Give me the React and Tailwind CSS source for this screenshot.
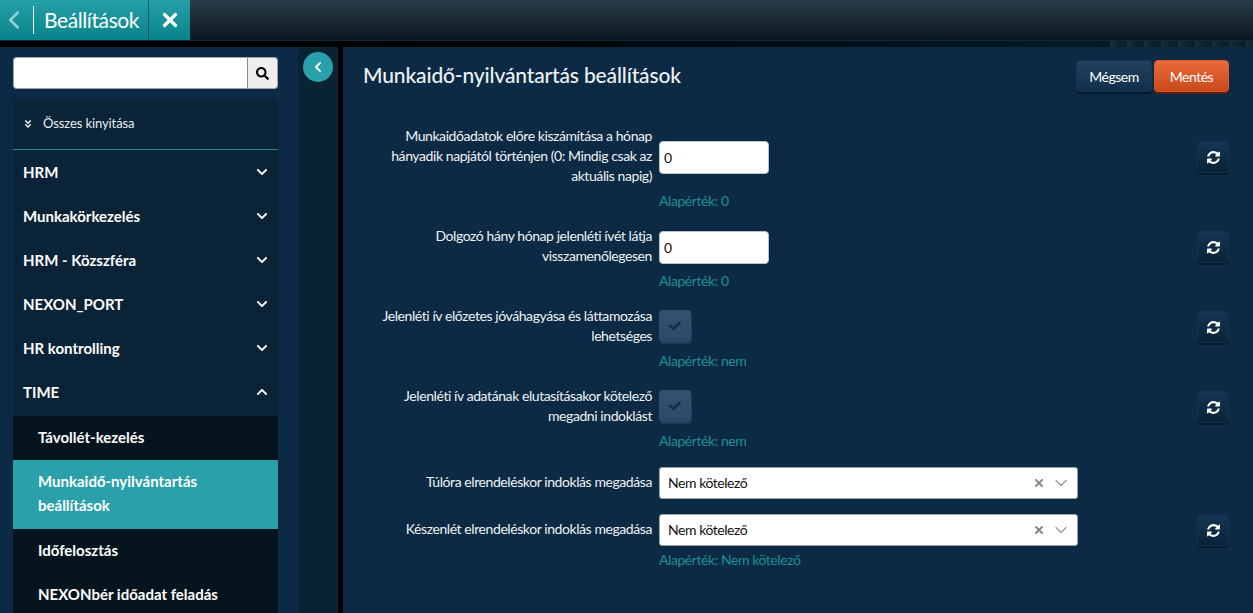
import { FaSearch, FaCheck, FaChevronDown, FaChevronUp, FaChevronLeft, FaAngleDoubleDown } from 'react-icons/fa';
import { ChevronLeft, ChevronDown, X } from 'lucide-react';

const menu = ['HRM', 'Munkakörkezelés', 'HRM - Közszféra', 'NEXON_PORT', 'HR kontrolling'];

const RefreshButton = ({ top = 'mt-[5px]' }) => (
  <button className={`${top} w-[32px] h-[32px] rounded-[4px] flex items-center justify-center text-white bg-gradient-to-b from-[#143553] to-[#0b2238] border border-[#12334f] shadow-[0_2px_0_#071a2b]`}>
    <svg viewBox="0 0 1792 1792" className="w-[15px] h-[15px]" fill="currentColor">
      <path d="M1639 1056q0 5-1 7-64 268-268 434.5t-478 166.5q-146 0-282.5-55t-243.5-157l-129 129q-19 19-45 19t-45-19-19-45v-448q0-26 19-45t45-19h448q26 0 45 19t19 45-19 45l-137 137q71 66 161 102t187 36q134 0 250-65t186-179q11-17 53-117 8-23 30-23h192q13 0 22.5 9.5t9.5 22.5zm25-800v448q0 26-19 45t-45 19h-448q-26 0-45-19t-19-45 19-45l138-138q-148-137-349-137-134 0-250 65t-186 179q-11 17-53 117-8 23-30 23h-199q-13 0-22.5-9.5t-9.5-22.5v-7q65-268 270-434.5t480-166.5q146 0 284 55.5t245 156.5l130-129q19-19 45-19t45 19 19 45z" />
    </svg>
  </button>
);

const Row = ({ label, hint, refresh = true, refreshTop, children, labelClass = '', hintClass = 'mt-[7px]' }) => (
  <div className="flex items-start">
    <div className={`w-[289px] text-right text-[#eef2f5] text-[14px] leading-[20px] tracking-[-0.42px] ${labelClass}`}>{label}</div>
    <div className="flex-1 ml-[7px]">
      {children}
      {hint && <div className={`text-[#1f8f96] text-[14px] leading-[20px] tracking-[-0.43px] ${hintClass}`}>{hint}</div>}
    </div>
    {refresh && <RefreshButton top={refreshTop} />}
  </div>
);

const NumberInput = () => (
  <input
    readOnly
    value="0"
    className="w-[110px] h-[33px] bg-white rounded-[4px] border border-[#b8c4cc] px-[4px] text-[14px] text-[#111]"
  />
);

const Check = () => (
  <div className="w-[32px] h-[32px] rounded-[4px] bg-gradient-to-b from-[#33526e] to-[#2b4a68] shadow-[1px_2px_0_#1f3d58] flex items-center justify-center text-[#152c44]">
    <FaCheck className="w-[12px] h-[12px]" />
  </div>
);

const Select = () => (
  <div className="w-[419px] h-[32px] bg-white rounded-[3px] border border-[#9aa3a8] flex items-center pl-[8px] pr-[6px] pb-[1px] text-[14px] text-[#111] tracking-[-0.45px]">
    <span className="flex-1">Nem kötelező</span>
    <X className="w-[12px] h-[12px] text-[#888] mr-[6px]" strokeWidth={4} />
    <ChevronDown className="w-[20px] h-[20px] text-[#999]" strokeWidth={1.5} />
  </div>
);

export default function App() {
  return (
    <div className="w-[1253px] h-[613px] overflow-hidden bg-black flex flex-col font-['Lato',sans-serif] relative">
      {/* Top bar */}
      <div className="h-[41px] shrink-0 flex bg-gradient-to-b from-[#2b3c48] to-[#0a1820] border-b border-[#0b2b3a]">
        <div className="w-[190px] flex bg-gradient-to-b from-[#24a0a8] to-[#07848a] text-white">
          <div className="w-[33px] flex items-center justify-center">
            <ChevronLeft className="w-[30px] h-[30px] text-[#8fd0d2] ml-[-5px]" strokeWidth={2} />
          </div>
          <div className="w-px h-[28px] bg-white my-auto" />
          <div className="w-[114px] pl-[10px] text-[21px] leading-[40px] tracking-[-0.4px]">Beállítások</div>
          <div className="flex-1 border-l border-[#0a5a60] flex items-center justify-center">
            <X className="w-[22px] h-[22px]" strokeWidth={3.5} />
          </div>
        </div>
      </div>
      <div className="h-[6px] shrink-0 flex justify-end bg-gradient-to-r from-black to-[#05222f]">
        <div className="w-[143px] bg-[repeating-linear-gradient(90deg,#1e2f36_0,#0e2229_8px,#07202a_17px)]" />
      </div>

      <div className="flex-1 flex min-h-0">
        {/* Sidebar */}
        <div className="w-[298px] shrink-0 bg-[#0c2a45] pl-[13px] pr-[20px] pt-[10px] overflow-hidden">
          <div className="flex h-[32px] rounded-[3px] overflow-hidden border border-[#9aa3a8]">
            <div className="flex-1 bg-white" />
            <div className="w-[30px] bg-[#eeeeee] border-l border-[#8a8a8a] flex items-center justify-center text-black">
              <FaSearch className="w-[13px] h-[13px]" />
            </div>
          </div>
          <div className="mt-[10px] bg-[#0a2337]">
            <div className="h-[51px] flex items-center pl-[10px] text-[#e9eef2] text-[13px] tracking-[-0.1px] border-b border-[#1c8f96]">
              <FaAngleDoubleDown className="w-[10px] h-[10px] mr-[10px]" />
              Összes kinyitása
            </div>
            {menu.map((item) => (
              <div key={item} className="h-[44px] flex items-center justify-between pl-[10px] pr-[10px] text-white text-[15px] font-bold">
                {item}
                <FaChevronDown className="w-[12px] h-[12px]" />
              </div>
            ))}
            <div className="h-[46px] flex items-center justify-between pb-[2px] pl-[10px] pr-[10px] text-white text-[15px] font-bold">
              TIME
              <FaChevronUp className="w-[12px] h-[12px]" />
            </div>
            <div className="bg-[#06141e] text-white text-[15px] font-bold">
              <div className="h-[44px] flex items-center pl-[25px] pb-[2px]">Távollét-kezelés</div>
              <div className="h-[69px] flex items-center pl-[25px] pr-[10px] pb-[3px] bg-[#29a0aa] leading-[24px]">Munkaidő-nyilvántartás beállítások</div>
              <div className="h-[44px] flex items-center pl-[25px] pb-[2px]">Időfelosztás</div>
              <div className="h-[44px] flex items-center pl-[25px] pb-[2px]">NEXONbér időadat feladás</div>
            </div>
          </div>
        </div>

        {/* Collapsed strip */}
        <div className="w-[40px] shrink-0 bg-[#0a2333]" />
        <div className="w-[5px] shrink-0 bg-black" />

        {/* Main content */}
        <div className="flex-1 bg-[#0c2a43] pl-[20px] pr-[24px] pt-[13px]">
          <div className="flex items-start justify-between h-[34px]">
            <h1 className="text-[21px] leading-[30px] tracking-[-0.15px] font-medium text-[#eef2f5]">Munkaidő-nyilvántartás beállítások</h1>
            <div className="flex gap-[2px]">
              <button className="w-[76px] h-[32px] rounded-[4px] text-white text-[14px] tracking-[-0.5px] bg-gradient-to-b from-[#23425f] to-[#12304b] border border-[#16364f] shadow-[0_2px_0_#071a2b]">Mégsem</button>
              <button className="w-[75px] h-[32px] rounded-[4px] text-white text-[14px] tracking-[-0.5px] bg-gradient-to-b from-[#ea6a3a] to-[#c9491b] border border-[#d9592a] shadow-[0_2px_0_#5a2010]">Mentés</button>
            </div>
          </div>

          <div className="mt-[32px] flex flex-col">
            <div className="h-[100px]">
              <Row label="Munkaidőadatok előre kiszámítása a hónap hányadik napjától történjen (0: Mindig csak az aktuális napig)" hint="Alapérték: 0" refreshTop="mt-[15px]" hintClass="mt-[17px]">
                <div className="mt-[15px]"><NumberInput /></div>
              </Row>
            </div>
            <div className="h-[80px]">
              <Row label="Dolgozó hány hónap jelenléti ívét látja visszamenőlegesen" hint="Alapérték: 0">
                <div className="mt-[5px]"><NumberInput /></div>
              </Row>
            </div>
            <div className="h-[80px]">
              <Row label="Jelenléti ív előzetes jóváhagyása és láttamozása lehetséges" hint="Alapérték: nem" hintClass="mt-[9px]">
                <div className="mt-[4px]"><Check /></div>
              </Row>
            </div>
            <div className="h-[80px]">
              <Row label="Jelenléti ív adatának elutasításakor kötelező megadni indoklást" hint="Alapérték: nem" hintClass="mt-[9px]">
                <div className="mt-[4px]"><Check /></div>
              </Row>
            </div>
            <div className="h-[47px]">
              <Row label="Túlóra elrendeléskor indoklás megadása" refresh={false} labelClass="mt-[6px]">
                <div className="mt-[1px]"><Select /></div>
              </Row>
            </div>
            <div>
              <Row label="Készenlét elrendeléskor indoklás megadása" hint="Alapérték: Nem kötelező" labelClass="mt-[6px]" refreshTop="mt-[1px]" hintClass="mt-[4px]">
                <div className="mt-[1px]"><Select /></div>
              </Row>
            </div>
          </div>
        </div>
      </div>

      {/* Sidebar collapse toggle */}
      <div className="absolute left-[303px] top-[52px] w-[30px] h-[30px] rounded-full bg-[#29a0aa] flex items-center justify-center text-white">
        <FaChevronLeft className="w-[12px] h-[12px]" />
      </div>
    </div>
  );
}
